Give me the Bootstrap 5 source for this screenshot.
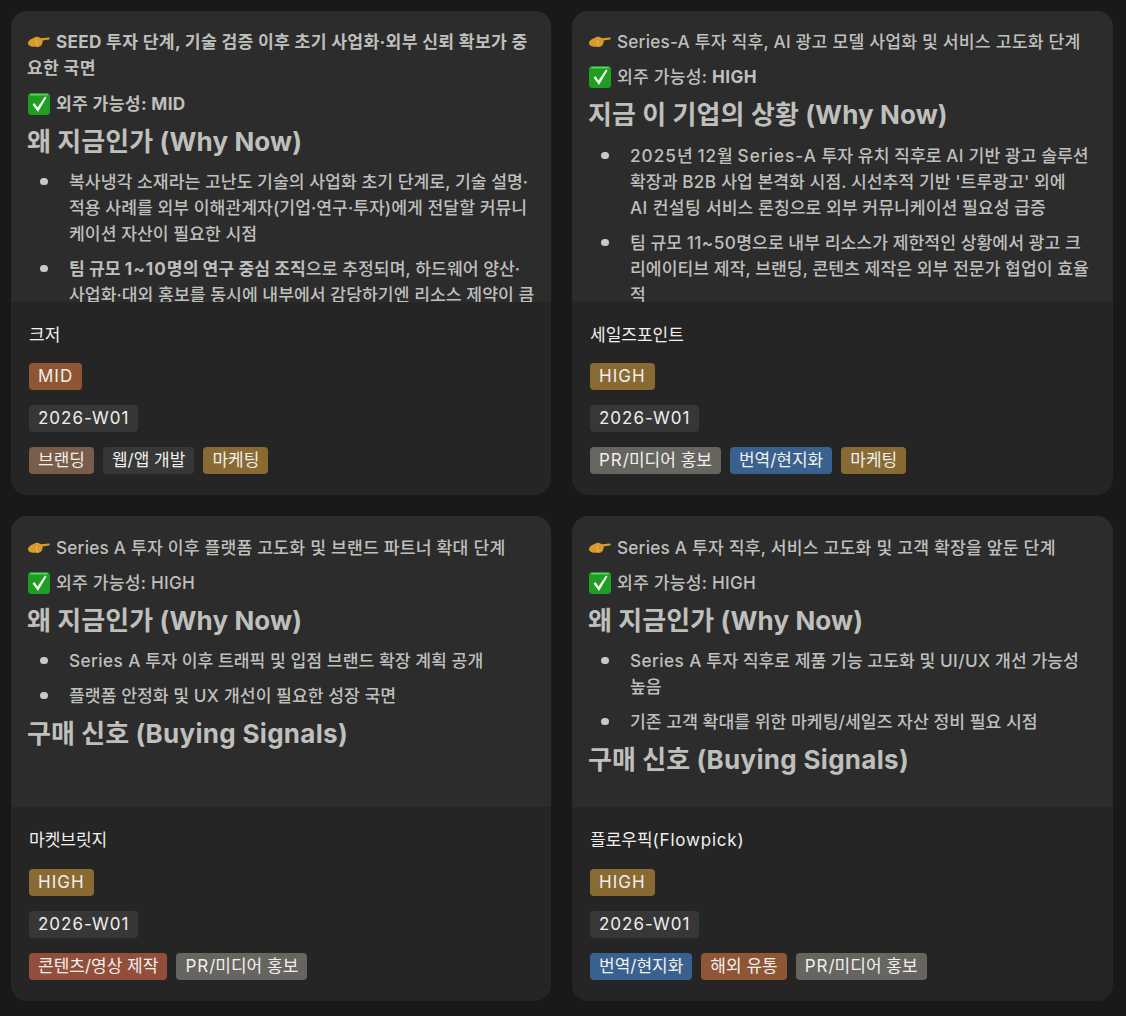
<!DOCTYPE html>
<html lang="ko"><head><meta charset="utf-8"><title>Leads</title>
<link rel="stylesheet" href="https://cdn.jsdelivr.net/npm/bootstrap@5.3.0/dist/css/bootstrap.min.css">
<style>
html,body{height:1016px;overflow:hidden}
body{background:#191919;font-family:Inter,"Noto Sans CJK KR","Noto Sans",sans-serif;padding:11px 13px 0 11px}
.lead-grid{display:grid;grid-template-columns:540px 541px;grid-template-rows:484px 485px;gap:21px;}
.lead-card{background:#252525;border-radius:16px;overflow:hidden;display:flex;flex-direction:column}
.preview{height:291px;flex:none;background:#2c2c2c;overflow:hidden;padding:18px 16px 0 16px;color:#bfbfbc;font-size:17.2px;line-height:26px;font-weight:500}
.preview p{margin:0 0 9px;letter-spacing:.2px}
.preview p.fw-bold{letter-spacing:.3px}
.preview h3{font-size:26px;font-weight:700;line-height:32px;margin:0 0 11.5px;color:#bfbfbc;letter-spacing:.1px}
.preview ul{margin:0 0 4px;padding:0 0 0 42px;list-style:none;letter-spacing:.03px}
.preview li{margin-bottom:9px;position:relative}
.preview li::before{content:"";position:absolute;left:-29px;top:9px;width:7.5px;height:7.5px;border-radius:50%;background:#c8c8c5}
.lead-first p:first-child{margin-bottom:10px}
.lead-first h3{margin-bottom:10.5px}
.lead-second .preview{padding-right:20px}
.lower .preview{padding-top:19px}
.lower .preview h3{margin-bottom:10.5px}
.emo{display:inline-block;width:24px;height:24px;vertical-align:-6px;margin-right:5px}
.lat{letter-spacing:1px}
.sp{letter-spacing:.4px}
h3 .sp{letter-spacing:.3px}
.title-line .lat{letter-spacing:.8px}
.info{padding:21px 18px 0 18px;display:flex;flex-direction:column;align-items:flex-start;color:#f0efed}
.title-line{line-height:24px;margin-bottom:16px;color:#f0efed;font-size:17px}
.lower .title-line{margin-bottom:17px}
.chips{height:27px;margin-bottom:15px;display:flex;gap:9px}
.chip{display:inline-block;height:27px;line-height:27px;padding:0 9px;border-radius:4px;font-size:17px;white-space:nowrap;color:#f0efed}
.c-gray{background:#373737}.c-orange{background:#8f5636}.c-yellow{background:#896a33}.c-brown{background:#7a5c4a}
.c-silver{background:#666560}.c-blue{background:#39618f}.c-red{background:#914f3b}
</style></head><body>
<svg width="0" height="0" class="position-absolute"><defs>
<symbol id="point" viewBox="0 0 24 24"><path d="M1 13c0-2 2-3.500 4.500-4.500l3-1.500c1.200-.5 2-.5 3 0l2.500 1.200 8-.6c1 0 1 1.700 0 1.800l-6.500 1c.5 1 .2 2.500-.5 3.200.2 1-.3 1.800-1.200 2-.3.800-1 1.200-2 1.200H7c-3.500 0-6-1.300-6-3.800z" fill="#d99a2b"/><path d="M9 11.500h1M9 14h1M10 16h1" stroke="#f0d9a8" stroke-width="1"/></symbol>
<symbol id="check" viewBox="0 0 24 24"><rect x="1" y="1" width="22" height="22" rx="3.500" fill="#1f9e22"/><rect x="3" y="2" width="18" height="1.500" rx=".7" fill="#6cc46e"/><path d="M5.500 12.500l2-1.500 3 4.500L18 4.500l1.500 1L11 20z" fill="#f3f6f3"/></symbol>
</defs></svg>
<main class="lead-grid">
<article class="lead-card lead-first">
<div class="preview">
<p class="fw-bold"><svg class="emo"><use href="#point"/></svg>SEED 투자 단계, 기술 검증 이후 초기 사업화·외부 신뢰 확보가 중요한 국면</p>
<p class="fw-bold"><svg class="emo"><use href="#check"/></svg>외주 가능성: MID</p>
<h3>왜 지금인가 (Why Now)</h3>
<ul><li>복사냉각 소재라는 고난도 기술의 사업화 초기 단계로, 기술 설명·적용 사례를 외부 이해관계자(기업·연구·투자)에게 전달할 커뮤니케이션 자산이 필요한 시점</li>
<li><b class="fw-bold">팀 규모 <span class="lat">1~10</span>명의 연구 중심 조직</b>으로 추정되며, 하드웨어 양산·사업화·대외 홍보를 동시에 내부에서 감당하기엔 리소스 제약이 큼</li></ul>
</div>
<div class="info"><div class="title-line">크저</div>
<div class="chips"><span class="chip c-orange lat">MID</span></div>
<div class="chips"><span class="chip c-gray lat">2026-W01</span></div>
<div class="chips"><span class="chip c-brown">브랜딩</span><span class="chip c-gray">웹/앱 개발</span><span class="chip c-yellow">마케팅</span></div></div>
</article>
<article class="lead-card lead-second">
<div class="preview">
<p><svg class="emo"><use href="#point"/></svg>Series-A 투자 직후, AI 광고 모델 사업화 및 서비스 고도화 단계</p>
<p><svg class="emo"><use href="#check"/></svg>외주 가능성: <b class="fw-bold sp">HIGH</b></p>
<h3>지금 이 기업의 상황 (Why Now)</h3>
<ul><li><span class="lat">2025</span>년 <span class="lat">12</span>월 <span class="lat">Series-A</span> 투자 유치 직후로 <span class="sp">AI</span> 기반 광고 솔루션 확장과 <span class="sp">B2B</span> 사업 본격화 시점. 시선추적 기반 '트루광고' 외에 <span class="sp text-nowrap">AI 컨설팅</span> 서비스 론칭으로 외부 커뮤니케이션 필요성 급증</li>
<li>팀 규모 <span class="sp">11~50</span>명으로 내부 리소스가 제한적인 상황에서 광고 크리에이티브 제작, 브랜딩, 콘텐츠 제작은 외부 전문가 협업이 효율적</li></ul>
</div>
<div class="info"><div class="title-line">세일즈포인트</div>
<div class="chips"><span class="chip c-yellow lat">HIGH</span></div>
<div class="chips"><span class="chip c-gray lat">2026-W01</span></div>
<div class="chips"><span class="chip c-silver"><span class="lat">PR</span>/미디어 홍보</span><span class="chip c-blue">번역/현지화</span><span class="chip c-yellow">마케팅</span></div></div>
</article>
<article class="lead-card lower">
<div class="preview">
<p><svg class="emo"><use href="#point"/></svg>Series A 투자 이후 플랫폼 고도화 및 브랜드 파트너 확대 단계</p>
<p><svg class="emo"><use href="#check"/></svg>외주 가능성: HIGH</p>
<h3>왜 지금인가 (Why Now)</h3>
<ul><li><span class="sp">Series A</span> 투자 이후 트래픽 및 입점 브랜드 확장 계획 공개</li>
<li>플랫폼 안정화 및 <span class="sp">UX</span> 개선이 필요한 성장 국면</li></ul>
<h3>구매 신호 (<span class="sp">Buying Signals</span>)</h3>
</div>
<div class="info"><div class="title-line">마켓브릿지</div>
<div class="chips"><span class="chip c-yellow lat">HIGH</span></div>
<div class="chips"><span class="chip c-gray lat">2026-W01</span></div>
<div class="chips"><span class="chip c-red">콘텐츠/영상 제작</span><span class="chip c-silver"><span class="lat">PR</span>/미디어 홍보</span></div></div>
</article>
<article class="lead-card lower">
<div class="preview">
<p><svg class="emo"><use href="#point"/></svg>Series A 투자 직후, 서비스 고도화 및 고객 확장을 앞둔 단계</p>
<p><svg class="emo"><use href="#check"/></svg>외주 가능성: HIGH</p>
<h3>왜 지금인가 (Why Now)</h3>
<ul><li><span class="sp">Series A</span> 투자 직후로 제품 기능 고도화 및 <span class="sp">UI/UX</span> 개선 가능성 높음</li>
<li>기존 고객 확대를 위한 마케팅/세일즈 자산 정비 필요 시점</li></ul>
<h3>구매 신호 (<span class="sp">Buying Signals</span>)</h3>
</div>
<div class="info"><div class="title-line">플로우픽<span class="lat">(Flowpick)</span></div>
<div class="chips"><span class="chip c-yellow lat">HIGH</span></div>
<div class="chips"><span class="chip c-gray lat">2026-W01</span></div>
<div class="chips"><span class="chip c-blue">번역/현지화</span><span class="chip c-orange">해외 유통</span><span class="chip c-silver"><span class="lat">PR</span>/미디어 홍보</span></div></div>
</article>
</main>
</body></html>
